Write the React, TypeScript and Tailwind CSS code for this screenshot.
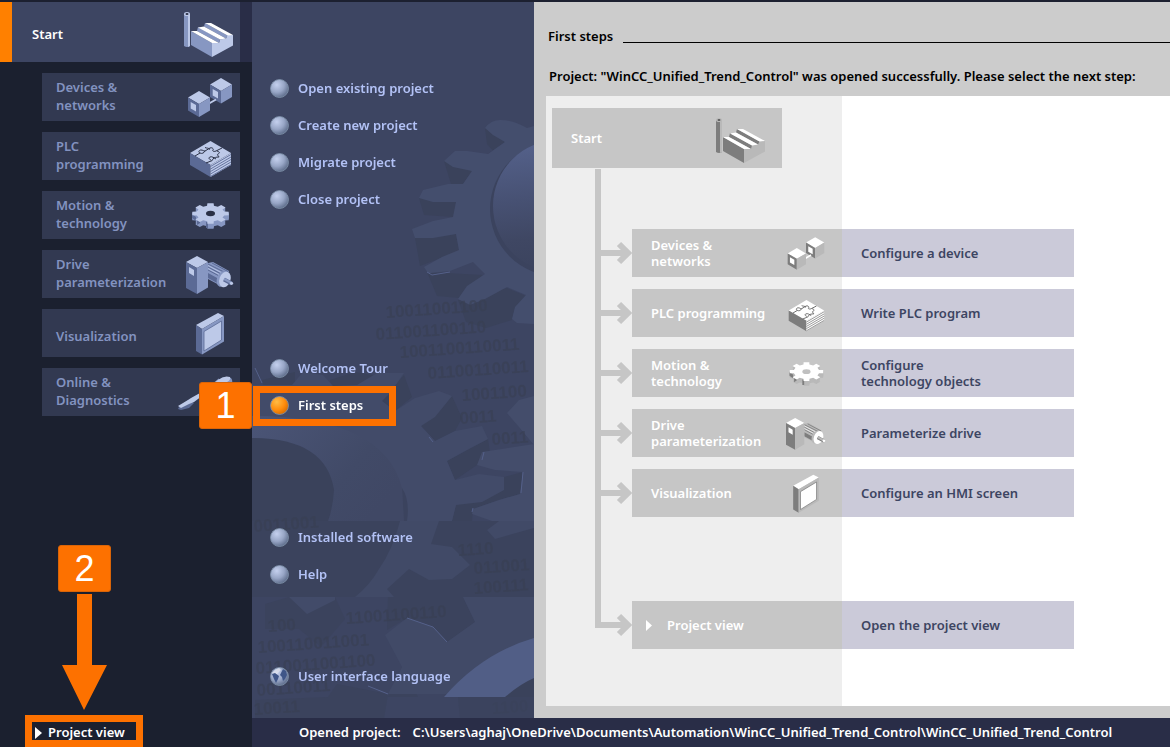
import type { ReactNode } from "react";

interface Tone {
  roof: string;
  top: string;
  left: string;
  right: string;
  line: string;
}

interface IconProps {
  tone: Tone;
  className?: string;
}

const blueTone: Tone = {
  roof: "#ffffff",
  top: "#bdc9e8",
  left: "#5b6a95",
  right: "#8797c2",
  line: "#2a3045",
};

const grayTone: Tone = {
  roof: "#ffffff",
  top: "#ffffff",
  left: "#7d7d7d",
  right: "#b9b9b9",
  line: "#5a5a5a",
};

function FactoryIcon({ tone, className }: IconProps) {
  const isBlue = tone === blueTone;
  const wall = isBlue ? tone.right : tone.left;
  const side = isBlue ? tone.top : tone.right;
  return (
    <svg viewBox="180 2 60 60" className={className} aria-hidden="true">
      <path d="M184 14h6v32q-3 2-6 0z" fill={wall} />
      <path d="M188 14h2v32l-2 1z" fill={side} />
      <ellipse cx="187" cy="14" rx="3" ry="2" fill={side} />
      <ellipse cx="187" cy="14" rx="1.5" ry="1" fill={tone.line} />
      <path d="M191 31l21 12v14l-21-12z" fill={wall} />
      <path d="M212 43h7l1-3.500 6-1 1.500-3.500h5.500v10.500L212 57z" fill={side} />
      <path d="M197 31l1-4 22 12.500-1 3.500zM204 26.500l1-3.500 22.500 12.500-1.500 3z" fill={wall} />
      <path
        d="M191 31h6l22 12h-7zM198 27.500l6-1 22 12-6 1zM205 23h6l22 12-5.500.5z"
        fill={tone.roof}
      />
    </svg>
  );
}

function DevicesIcon({ tone, className }: IconProps) {
  return (
    <svg viewBox="180 73 60 48" className={className} aria-hidden="true">
      <path d="M221 78l11 6.500-11 6.500-11-6.500z" fill={tone.top} />
      <path d="M210 84.500l11 6.500v12.500L210 97z" fill={tone.left} />
      <path d="M232 84.500L221 91v12.500l11-6.500z" fill={tone.right} />
      <path d="M212.700 89l5.300 3v6.500l-5.300-3z" fill={tone.top} />
      <path d="M209 103.500l7-4" stroke={tone.top} strokeWidth="2" />
      <path d="M199 91l11 6.500-11 6.500-11-6.500z" fill={tone.top} />
      <path d="M188 97.500l11 6.500v13l-11-6.500z" fill={tone.left} />
      <path d="M210 97.500l-11 6.500v13l11-6.500z" fill={tone.right} />
      <path d="M190.700 102l5.300 3v6.500l-5.300-3z" fill={tone.top} />
    </svg>
  );
}

function PlcIcon({ tone, className }: IconProps) {
  return (
    <svg viewBox="180 133 60 48" className={className} aria-hidden="true">
      <path d="M210.500 142l20.500 12-20.500 12-20.500-12z" fill={tone.top} />
      <path d="M190 154l20.500 12v12L190 166z" fill={tone.left} />
      <path d="M231 154l-20.500 12v12l20.500-12z" fill={tone.top} />
      <path
        d="M210.500 167.500l20.500-12M210.500 170l20.500-12M210.500 172.500l20.500-12M210.500 175l20.500-12M210.500 177.500l20.500-12"
        stroke={tone.left}
        strokeWidth="0.900"
      />
      <path
        d="M195 157l5-3c-2-1-1-3 1-3s2 1 4 1l5-3c2-1 4 1 3 2s1 2 3 1l6-3M205 148.500c2 1 3 0 5 2M217 152c3 1 3 2 1 3s2 3 1 3-3 0-5 1-1 3-3 3l-5 2M200 154c2 1 4 0 5-2M211 161c-2-1-3-2-1-3s4 1 6 2"
        fill="none"
        stroke={tone.line}
        strokeWidth="1"
      />
    </svg>
  );
}

// eight teeth, flattened into an ellipse
const cogPoints = Array.from({ length: 8 })
  .flatMap((_, i) => {
    const mid = (i * Math.PI) / 4;
    return [
      [mid - 0.24, 0.76],
      [mid - 0.17, 1],
      [mid + 0.17, 1],
      [mid + 0.24, 0.76],
    ];
  })
  .map(([a, r]) => `${(210.5 + Math.cos(a) * 18.5 * r).toFixed(1)},${(213.5 + Math.sin(a) * 10.5 * r).toFixed(1)}`)
  .join(" ");

function CogIcon({ tone, className }: IconProps) {
  return (
    <svg viewBox="180 191 60 48" className={className} aria-hidden="true">
      {[5, 4, 3, 2, 1].map((dy) => (
        <polygon key={dy} points={cogPoints} fill={tone.right} transform={`translate(0 ${dy})`} />
      ))}
      <path d="M192 214v4l4 3v-4zM197 220v5l3-2v-4zM206 222v6l2 0v-6z" fill={tone.left} />
      <polygon points={cogPoints} fill={tone.top} />
      <ellipse cx="210.500" cy="213.500" rx="4.500" ry="2.700" fill={tone === blueTone ? tone.line : "#c0c0c0"} />
    </svg>
  );
}

function DriveIcon({ tone, className }: IconProps) {
  return (
    <svg viewBox="180 250 60 48" className={className} aria-hidden="true">
      <path d="M208 263l5-1 16 9-6 16-15-8z" fill={tone.right} />
      <path
        d="M208 264l18 9M208 267l15 8M208 270l13 7M212 263l16 8.500"
        stroke={tone.left}
        strokeWidth="1"
      />
      <path d="M208 265.500l17 9M208 268.500l14 7.500" stroke={tone.top} strokeWidth="0.800" />
      <path d="M208 273l11 6v5l-11-6z" fill={tone.left} />
      <ellipse cx="222" cy="279" rx="5" ry="8" fill={tone.right} transform="rotate(20 222 279)" />
      <ellipse cx="225" cy="279.500" rx="5.500" ry="8" fill={tone.top} transform="rotate(20 225 279.500)" />
      <path d="M224 279.500l7.500 4" stroke={tone.left} strokeWidth="4" />
      <path d="M224 279l7.500 4" stroke={tone.right} strokeWidth="2.500" />
      <circle cx="231.500" cy="283.300" r="1.600" fill={tone.top} />
      <path d="M197 256l11 6-11 6-11-6z" fill={tone.top} />
      <path d="M186 262l11 6v26l-11-6z" fill={tone.left} />
      <path d="M208 262l-11 6v26l11-6.500z" fill={tone.right} />
      <path d="M189 267l5 3v6l-5-3z" fill={tone.top} />
    </svg>
  );
}

function PanelIcon({ tone, className }: IconProps) {
  return (
    <svg viewBox="180 309 60 48" className={className} aria-hidden="true">
      <path d="M218 313l6 3-22 13-6-4z" fill={tone.top} />
      <path d="M196 325l6 4v25.500l-6-3.500z" fill={tone.left} />
      <path d="M202 329l22-13v25.500l-22 13z" fill={tone.right} />
      <path d="M204 331.500l17.500-10.500v19L204 351z" fill={tone.top} stroke={tone.left} strokeWidth="0.800" />
    </svg>
  );
}

function DiagnosticsIcon({ tone, className }: IconProps) {
  return (
    <svg viewBox="180 368 60 48" className={className} aria-hidden="true" overflow="visible">
      <path d="M200 397l20-17" stroke={tone.right} strokeWidth="4" />
      <path d="M210 388l9-8q6-5 12-2 3 4-1 8l-14 8z" fill={tone.right} />
      <path d="M209 387l9-7q6-5 12-3 1 3-3 5l-13 8z" fill={tone.top} />
      <path d="M179 407l9-7 6 3-5 5-8 2-3-1z" fill={tone.left} />
      <path d="M178 406l10-6 3-2 9-5 2 3-8 6-5 2-8 4z" fill={tone.top} />
    </svg>
  );
}

interface NavItem {
  label: ReactNode;
  icon: (props: IconProps) => ReactNode;
  className?: string;
}

const navItems: NavItem[] = [
  { label: <>Devices &amp;<br />networks</>, icon: DevicesIcon },
  { label: <>PLC<br />programming</>, icon: PlcIcon },
  { label: <>Motion &amp;<br />technology</>, icon: CogIcon },
  { label: <>Drive<br />parameterization</>, icon: DriveIcon },
  { label: "Visualization", icon: PanelIcon, className: "pt-2" },
  { label: <>Online &amp;<br />Diagnostics</>, icon: DiagnosticsIcon },
];

const menuGroups = [
  {
    spacing: "mt-[68px]",
    items: ["Open existing project", "Create new project", "Migrate project", "Close project"],
  },
  { spacing: "mt-[132px]", items: ["Welcome Tour", "First steps"] },
  { spacing: "mt-[95px]", items: ["Installed software", "Help"] },
  { spacing: "mt-[65px]", items: ["User interface language"] },
];

interface Step extends NavItem {
  action: ReactNode;
  iconSize: string;
}

const steps: Step[] = [
  {
    label: <>Devices &amp;<br />networks</>,
    icon: DevicesIcon,
    action: "Configure a device",
    iconSize: "w-[50px] h-10",
  },
  { label: "PLC programming", icon: PlcIcon, action: "Write PLC program", iconSize: "w-[52px] h-[42px]" },
  {
    label: <>Motion &amp;<br />technology</>,
    icon: CogIcon,
    action: <>Configure<br />technology objects</>,
    iconSize: "w-[56px] h-11",
  },
  {
    label: <>Drive<br />parameterization</>,
    icon: DriveIcon,
    action: "Parameterize drive",
    iconSize: "w-[50px] h-10",
  },
  { label: "Visualization", icon: PanelIcon, action: "Configure an HMI screen", iconSize: "w-[56px] h-11" },
];

function Badge({ children, className }: { children: ReactNode; className: string }) {
  return (
    <span
      className={`absolute z-10 flex h-[47px] w-[53px] items-center justify-center rounded-[3px] border border-[#d96408] bg-[#fd7100] font-['Liberation_Sans',sans-serif] text-[36px] font-normal text-white ${className}`}
    >
      {children}
    </span>
  );
}

function Sidebar() {
  return (
    <nav className="relative flex w-[252px] shrink-0 flex-col bg-[#1b202f]">
      <div className="flex h-[60px] bg-[#292d47]">
        <button className="flex w-60 items-center justify-between border-l-12 border-[#ff8000] bg-[#3d4562] pl-5 text-white">
          <span className="pt-1.5">Start</span>
          <FactoryIcon tone={blueTone} className="h-[60px] w-[60px]" />
        </button>
      </div>
      <ul className="mt-[11px] mr-3 ml-[42px] flex flex-col gap-[11px]">
        {navItems.map(({ label, icon: Icon, className }, i) => (
          <li key={i}>
            <button className="flex h-12 w-full items-center bg-[#323951] pl-3.5 text-left leading-[18px] text-[#8393c0]">
              <span className={`w-31 shrink-0 pb-0.5 whitespace-nowrap ${className ?? ""}`}>{label}</span>
              <Icon tone={blueTone} className="h-12 w-[60px] shrink-0" />
            </button>
          </li>
        ))}
      </ul>
      <Badge className="top-[380px] right-0">1</Badge>

      <Badge className="bottom-[155px] left-[58px]">2</Badge>
      <svg viewBox="0 0 46 118" className="absolute bottom-9 left-[61px] h-[118px] w-[46px]" aria-hidden="true">
        <path d="M16 1h15v71h15L23 117 1 72h15z" fill="#fd7100" />
      </svg>
      <button className="mt-auto ml-[25px] flex h-8 w-[118px] items-center gap-1.5 border-7 border-[#fd7100] pt-1 pl-[3px] whitespace-nowrap text-white">
        <svg viewBox="0 0 7 12" className="h-3 w-[7px] shrink-0" aria-hidden="true">
          <path d="M0 0l7 6-7 6z" fill="currentColor" />
        </svg>
        Project view
      </button>
    </nav>
  );
}

const binaryLines = [
  { x: 386, y: 318, text: "10011001100" },
  { x: 376, y: 340, text: "011001100110" },
  { x: 400, y: 358, text: "1001100110011" },
  { x: 428, y: 379, text: "01100110011" },
  { x: 462, y: 401, text: "1001100" },
  { x: 460, y: 424, text: "0011" },
  { x: 492, y: 445, text: "0011" },
  { x: 254, y: 532, text: "0011001" },
  { x: 458, y: 556, text: "1110" },
  { x: 474, y: 574, text: "011001" },
  { x: 474, y: 594, text: "100111" },
  { x: 346, y: 624, text: "11001100110" },
  { x: 268, y: 632, text: "100" },
  { x: 258, y: 653, text: "100110011001" },
  { x: 256, y: 674, text: "0110011001100" },
  { x: 257, y: 696, text: "00110011" },
  { x: 254, y: 715, text: "10011" },
  { x: 492, y: 714, text: "1100" },
];

function GearBackdrop() {
  return (
    <svg
      viewBox="252 2 282 716"
      preserveAspectRatio="xMinYMin slice"
      className="absolute inset-0 h-full w-full"
      aria-hidden="true"
    >
      <defs>
        <linearGradient id="disc" x1="0.200" y1="0" x2="0.300" y2="1">
          <stop offset="0" stopColor="#55628c" />
          <stop offset="0.450" stopColor="#475173" />
          <stop offset="0.750" stopColor="#3f4763" />
          <stop offset="1" stopColor="#3b435e" />
        </linearGradient>
        <linearGradient id="hub" x1="0" y1="0" x2="1" y2="0.600">
          <stop offset="0" stopColor="#4b5577" />
          <stop offset="0.700" stopColor="#414a67" />
          <stop offset="1" stopColor="#404865" />
        </linearGradient>
      </defs>

      <path d="M252 521h282v76H252z" fill="#3b435d" />
      <path
        d="M485 128l2 16 8 9-7 1 17-12zM444 161l7 23h12l9-13zM419 198l5 17 29 2 3-15zM415 238l5 28 39-15-3-17zM427 272l10 24 22 2 24-23zM458 300l8 22 20 6 26-8 3-12 11-12-19-8z"
        fill="#3a425b"
      />
      <path
        d="M534 126l-7 2q-13-8-27-8-9 0-15 8l8 7 12 7-17 12-21-3h-12l-11 10 9 6 19 4-9 13h-15l-25 6-4 8 14 4h23l-3 15-20 4-21 8 3 9h18l23-4 3 16-17 7-18 10 4 6h3l19-2 23-9 12 12-18 12-9 13 12 6 15-6 22-12 19 8-11 12-3 12 5 4 17 1z"
        fill="#444e6d"
      />
      <circle cx="557" cy="209" r="67" fill="#3b435e" />
      <circle cx="559" cy="206" r="66" fill="url(#disc)" />

      <path
        d="M262 380l33-8v18h-30zM330 380l25-8 22 4-14 20h-30zM382 401l22-26 8 22-17 14zM421 426l31-30 10 22-7 13-20 10zM447 461l41-22 2 14-10 10-25 17zM456 505l48-15 16 4-21 6-26 9-1 12h-20zM504 477l19-5-3 22-16-4z"
        fill="#3a425b"
      />
      <path
        d="M252 385h40l11-13 20 3 10 11 24-1 20-12h27l-14 20-8 8 13 10 20-13 24-7 13 5-17 21-14 9 14 15 20-10 27-5 6 13-23 12-18 10 8 19 24-6 25 3v13l-22 12-26 3-4 16H252z"
        fill="#424b69"
      />
      <path d="M252 416q132 0 150 72l2 33H252z" fill="url(#hub)" />
      <path d="M402 488q8 12 5 33h-3z" fill="#3b435e" />
      <path d="M252 438q74 0 82 52-1 17-6 31h-76z" fill="#3a425b" />
      <path
        d="M507 413l12-13 15-4v49l-15-18zM477 465l5-13 52-8v77h-42l-20-7 1-5 26-9 21-6 3-22-28-2z"
        fill="#444d6b"
      />

      <path
        d="M400 521h39l-8 23 21 3 18 18-18 14-23 1-20-11-22 20 7 8h-39q15-12 24-28 14-20 21-48z"
        fill="#414a67"
      />
      <path d="M499 521l-12 9 8 9 39-11v-7z" fill="#414a67" />

      <path d="M289 597h46l10 22-24 28-22-18-34 0V604zM388 597h75l12 25-28 20-14-15-26-9-20 12z" fill="#3b435d" />
      <path d="M289 597l18 17 28-14v-3z" fill="#424b69" />
      <path d="M402 667l8 14 8 16h-30zM255 700l73-3 9-13 51 10-4 24H255z" fill="#3b435d" />
      <g fill="#394053" fontFamily="'Liberation Sans', sans-serif" fontSize="17" fontWeight="700" opacity="0.600">
        {binaryLines.map(({ x, y, text }) => (
          <text key={`${x}-${y}`} x={x} y={y} transform={`rotate(-4 ${x} ${y})`}>
            {text}
          </text>
        ))}
      </g>
      <path d="M463 597l12 25-28 20-14-15-26-9-22 17 17 32-14 27h146V597z" fill="#414a67" />
      <path d="M444 697q38-44 90-59v59z" fill="#515e86" />
      <path d="M505 697q15-13 29-19v19z" fill="#3a425b" />
      <path d="M458 697h76v21h-74z" fill="#3b435c" opacity="0.700" />
      <path
        d="M407 618l26 9 14 15M368 686l20 8M255 368l7 15M427 272l5 3 18-3M433 442l-4-5M482 460l2-8M521 493l2-21M472 512l1-4"
        fill="none"
        stroke="#55618a"
        strokeWidth="1"
      />
    </svg>
  );
}

function Bullet({ kind }: { kind: string }) {
  const active = kind === "First steps";
  return (
    <svg viewBox="0 0 19 19" className="h-[19px] w-[19px] shrink-0" aria-hidden="true">
      <defs>
        <radialGradient id="ball" cx="0.350" cy="0.300" r="0.750">
          <stop offset="0" stopColor="#c4d0ee" />
          <stop offset="0.550" stopColor="#98a6c6" />
          <stop offset="1" stopColor="#5b6a88" />
        </radialGradient>
        <radialGradient id="ball-active" cx="0.350" cy="0.300" r="0.750">
          <stop offset="0" stopColor="#ffbc45" />
          <stop offset="0.600" stopColor="#ff8c0c" />
          <stop offset="1" stopColor="#d56b00" />
        </radialGradient>
      </defs>
      <circle cx="9.500" cy="9.500" r="9" fill={active ? "url(#ball-active)" : "url(#ball)"} stroke="#8294ac" strokeWidth="0.800" />
      {kind === "User interface language" && (
        <>
          <path d="M2 6q3-4 7-5l2 2-2 2-2 2-3 1z" fill="#e2e5ee" opacity="0.700" />
          <path d="M2 7l3-1 4 3-1 3-2 4-2-4zM11 6l2-4 3 2 1 4-2 4-2 2-1-4-2-2z" fill="#3f5688" />
        </>
      )}
    </svg>
  );
}

function PortalMenu() {
  return (
    <div className="relative w-[282px] shrink-0 bg-[#3d4562] text-[#b3c2f6]">
      <GearBackdrop />
      <div className="relative pb-[23px]">
        {menuGroups.map((group) => (
          <ul key={group.spacing} className={group.spacing}>
            {group.items.map((item) => (
              <li key={item} className="relative">
                <button
                  className={`flex h-[37px] w-full items-center gap-[9px] pl-[18px] text-left ${item === "First steps" ? "text-white" : ""}`}
                >
                  <Bullet kind={item} />
                  {item}
                </button>
                {item === "First steps" && (
                  <span className="pointer-events-none absolute top-[-1px] left-px h-10 w-[143px] border-7 border-[#fd7100]" />
                )}
              </li>
            ))}
          </ul>
        ))}
      </div>
    </div>
  );
}

function Connector() {
  return (
    <svg viewBox="0 0 37 24" className="h-6 w-[37px] shrink-0" aria-hidden="true">
      <path d="M0 12h32M24 3l9 9-9 9" fill="none" stroke="#c6c6c6" strokeWidth="6" />
    </svg>
  );
}

function StepAction({ children }: { children: ReactNode }) {
  return (
    <button className="flex h-12 w-[232px] items-center bg-[#cbcad9] pl-[19px] text-left text-[#3d4562]">
      {children}
    </button>
  );
}

function FirstSteps() {
  return (
    <main className="flex min-w-0 flex-1 flex-col bg-[#ccc] pb-3 pl-3 text-black">
      <div className="flex items-center pt-6 pl-0.5">
        <h1 className="leading-5">First steps</h1>
        <span className="mt-3 ml-2.5 h-px flex-1 bg-black" />
      </div>
      <p className="mt-5 pl-[3px] leading-5 whitespace-nowrap">
        Project: "WinCC_Unified_Trend_Control" was opened successfully. Please select the next step:
      </p>
      <section className="mt-2.5 flex-1 bg-[linear-gradient(to_right,#eee_296px,#fff_296px)] pt-3 leading-4">
        <div className="ml-1.5 flex h-[60px] w-[230px] items-center justify-between bg-[#c6c6c6] pr-2.5 pl-[19px] text-white">
          Start
          <FactoryIcon tone={grayTone} className="h-[60px] w-[60px]" />
        </div>
        <div className="relative mt-px pt-[60px] pl-[49px]">
          <span className="absolute top-0 bottom-[21px] left-[49px] w-1.5 bg-[#c6c6c6]" />
          <ul className="flex flex-col gap-3">
            {steps.map(({ label, icon: Icon, action, iconSize }, i) => (
              <li key={i} className="flex items-center">
                <Connector />
                <div className="flex h-12 w-[210px] items-center bg-[#c6c6c6] pl-[19px] text-white">
                  <span className="w-31 shrink-0 whitespace-nowrap">{label}</span>
                  <span className="flex w-[62px] shrink-0 justify-center">
                    <Icon tone={grayTone} className={iconSize} />
                  </span>
                </div>
                <StepAction>{action}</StepAction>
              </li>
            ))}
          </ul>
          <div className="mt-21 flex items-center">
            <Connector />
            <div className="flex h-12 w-[210px] items-center gap-3 bg-[#c6c6c6] pl-3.5 text-white">
              <svg viewBox="0 0 6 11" className="h-[11px] w-1.5" aria-hidden="true">
                <path d="M0 0l6 5.500L0 11z" fill="currentColor" />
              </svg>
              <span className="pl-[3px]">Project view</span>
            </div>
            <StepAction>Open the project view</StepAction>
          </div>
        </div>
      </section>
    </main>
  );
}

export default function App() {
  return (
    <div className="flex min-h-screen overflow-hidden border-t-2 border-[#1c2030] font-['Noto_Sans','Open_Sans',sans-serif] text-[13px] font-semibold">
      <Sidebar />
      <div className="flex min-w-0 flex-1 flex-col bg-[#292d47]">
        <div className="flex flex-1">
          <PortalMenu />
          <FirstSteps />
        </div>
        <footer className="flex h-[29px] items-center gap-3 pl-[47px] whitespace-nowrap text-white">
          <span>Opened project:</span>
          <span>
            C:\Users\aghaj\OneDrive\Documents\Automation\WinCC_Unified_Trend_Control\WinCC_Unified_Trend_Control
          </span>
        </footer>
      </div>
    </div>
  );
}
